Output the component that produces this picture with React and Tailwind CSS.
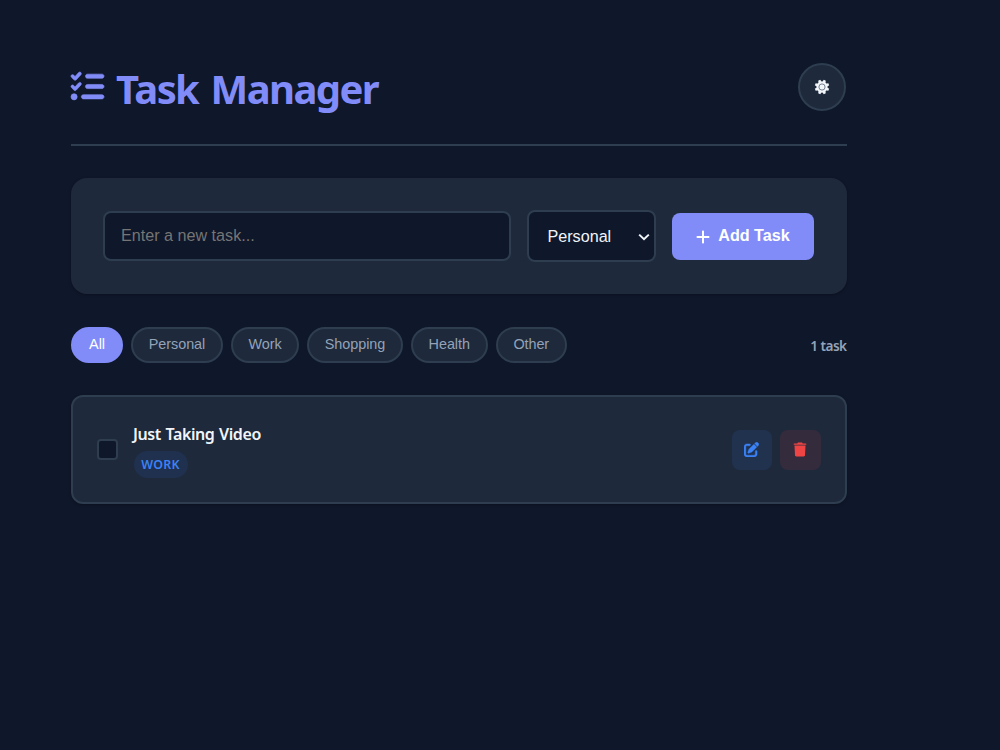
import React, { useState } from "react";
import { FaListCheck, FaPenToSquare, FaPlus } from "react-icons/fa6";

const categories = [
  { name: "All", width: "w-[52px]" },
  { name: "Personal", width: "w-[92px]" },
  { name: "Work", width: "w-[68px]" },
  { name: "Shopping", width: "w-[96px]" },
  { name: "Health", width: "w-[76.5px]" },
  { name: "Other", width: "w-[71.5px]" },
];

const teeth = [0, 45, 90, 135, 180, 225, 270, 315];

function SunIcon() {
  return (
    <svg viewBox="0 0 16 16" className="h-4 w-4">
      <circle cx="8" cy="8" r="5.5" fill="currentColor" />
      {teeth.map((angle) => (
        <path
          key={angle}
          d="M6.3 3.4 6.9.7h2.2l.6 2.7z"
          fill="currentColor"
          transform={`rotate(${angle + 22.5} 8 8)`}
        />
      ))}
      <circle cx="8" cy="8" r="3.1" fill="none" stroke="#65707f" strokeWidth="0.9" />
    </svg>
  );
}

function TrashIcon() {
  return (
    <svg viewBox="0 0 14 15" className="h-[15px] w-[14px]" fill="currentColor">
      <path d="M4.9.5h4.2l.6.9h3.1c.3 0 .5.2.5.5v.9H.7v-.9c0-.3.2-.5.5-.5h3.1z" />
      <path d="M1.5 3.5h11l-.5 9.8c0 .7-.6 1.2-1.3 1.2H3.3c-.7 0-1.3-.5-1.3-1.2z" />
    </svg>
  );
}

function Header() {
  return (
    <header className="flex h-[83px] items-start justify-between border-b-2 border-[#2e3d50]">
      <h1 className="flex items-start text-[#818cf8]">
        <FaListCheck
          className="mt-[7px] h-[33px] w-[33px] overflow-visible"
          stroke="currentColor"
          strokeWidth="10"
        />
        <span className="ml-3 mt-[-1px] whitespace-nowrap font-['Noto_Sans',sans-serif] text-[40px] font-bold leading-[54px] tracking-[-1.6px] [word-spacing:3.5px]">
          Task Manager
        </span>
      </h1>
      <button className="-mr-px mr-[0.5px] flex h-12 w-12 items-center justify-center rounded-full border-2 border-[#2e3d50] bg-[#1e293b] text-[#f1f5f9]">
        <SunIcon />
      </button>
    </header>
  );
}

function TaskForm() {
  const [text, setText] = useState("");

  return (
    <form className="mt-8 flex h-[116px] items-center rounded-2xl bg-[#1e293b] px-8 shadow-[0_1px_3px_rgba(0,0,0,0.3)]">
      <input
        value={text}
        onChange={(e) => setText(e.target.value)}
        placeholder="Enter a new task..."
        className="h-[50px] w-[407.5px] rounded-lg border-2 border-[#2e3d50] bg-[#0f172a] px-4 pb-[2px] text-[16.15px] text-[#f1f5f9] placeholder:text-[#757575]"
      />
      <div className="relative ml-4 h-[52px] w-[129px]">
        <select className="h-full w-full appearance-none rounded-lg border-2 border-[#2e3d50] bg-[#0f172a] pl-[19px] text-[16.15px] text-[#f1f5f9]">
          <option>Personal</option>
          <option>Work</option>
        </select>
        <svg
          viewBox="0 0 12 12"
          className="pointer-events-none absolute right-[6px] top-[21px] h-3 w-3 text-[#f1f5f9]"
        >
          <path d="M1.2 3.6 6 8.2l4.8-4.6" fill="none" stroke="currentColor" strokeWidth="2" />
        </svg>
      </div>
      <button
        type="button"
        className="ml-4 flex h-[47px] w-[142px] items-center justify-center gap-[7px] rounded-lg bg-[#818cf8] text-[16.15px] font-bold text-white"
      >
        <FaPlus className="mt-px h-4 w-4" />
        <span className="-mt-[2px]">Add Task</span>
      </button>
    </form>
  );
}

function Filters() {
  const [active, setActive] = useState("All");

  return (
    <div className="mt-[33px] flex items-center justify-between">
      <div className="flex gap-2">
        {categories.map((category) => (
          <button
            key={category.name}
            onClick={() => setActive(category.name)}
            className={`h-9 rounded-full border-2 px-0 pb-[1px] text-[14.4px] tracking-[-0.05px] ${category.width} ${
              active === category.name
                ? "border-[#818cf8] bg-[#818cf8] text-white"
                : "border-[#2e3d50] bg-[#1e293b] text-[#94a3b8]"
            }`}
          >
            {category.name}
          </button>
        ))}
      </div>
      <span className="mt-[2px] whitespace-nowrap font-['Noto_Sans',sans-serif] text-[13.6px] font-semibold leading-5 tracking-[-0.55px] text-[#94a3b8]">
        1 task
      </span>
    </div>
  );
}

function TaskItem() {
  return (
    <div className="mt-8 flex h-[109px] items-center rounded-xl border-2 border-[#2e3d50] bg-[#1e293b] px-6 shadow-[0_1px_3px_rgba(0,0,0,0.3)]">
      <button className="h-[21px] w-[21px] rounded border-2 border-[#2e3d50] bg-[#0f172a]" />
      <div className="ml-4 flex flex-1 flex-col items-start font-['Noto_Sans',sans-serif]">
        <span className="-ml-px text-[16px] font-semibold leading-[26px] tracking-[-0.4px] text-[#f1f5f9] [word-spacing:0.8px]">
          Just Taking Video
        </span>
        <span className="mt-1 flex h-[27px] w-[54px] items-center justify-center rounded-full bg-[#20314f] pr-px pt-px text-[12.4px] font-semibold tracking-[0.25px] text-[#3b82f6]">
          WORK
        </span>
      </div>
      <div className="flex gap-2">
        <button className="flex h-10 w-[40.5px] items-center justify-center rounded-lg bg-[#21324f] text-[#3b82f6]">
          <FaPenToSquare className="h-[15px] w-[15px]" stroke="currentColor" strokeWidth="12" />
        </button>
        <button className="flex h-10 w-[40.5px] items-center justify-center rounded-lg bg-[#342c3c] text-[#ef4444]">
          <TrashIcon />
        </button>
      </div>
    </div>
  );
}

function App() {
  return (
    <div className="min-h-screen bg-[#0f172a] pl-[71px] pt-[63px] font-['Liberation_Sans',Arial,sans-serif]">
      <main className="w-[775.5px]">
        <Header />
        <TaskForm />
        <Filters />
        <TaskItem />
      </main>
    </div>
  );
}

export default App;
